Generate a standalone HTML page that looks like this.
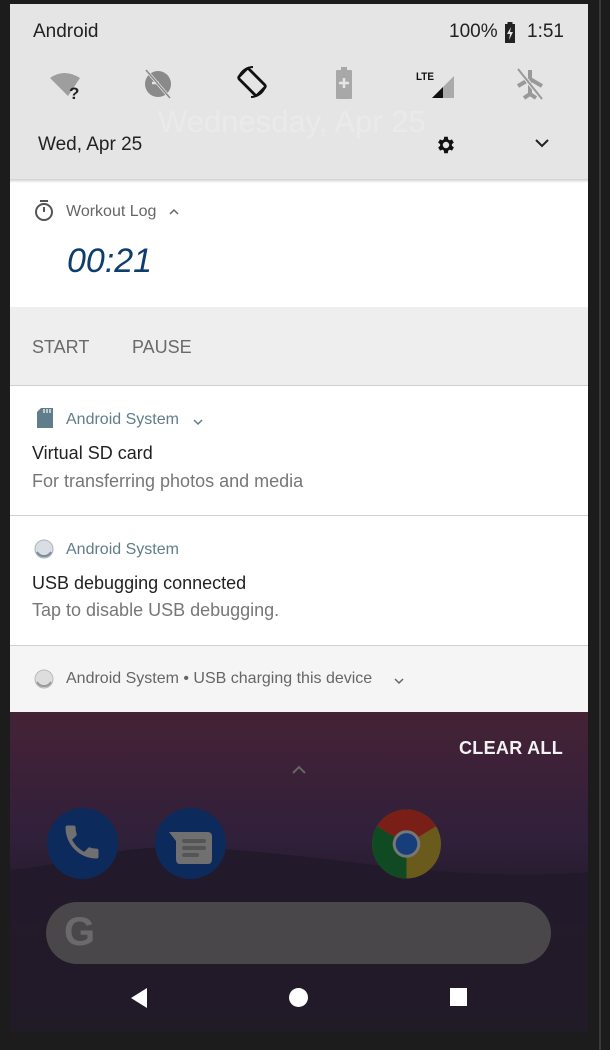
<!DOCTYPE html>
<html><head><meta charset="utf-8"><style>
*{margin:0;padding:0;box-sizing:border-box}
body{width:610px;height:1050px;background:#1c1c1c;font-family:"Liberation Sans",sans-serif;position:relative;overflow:hidden}
.scr{position:absolute;left:10px;top:4px;width:578px;height:1028px;overflow:hidden;background:#2a1d2e}
.edge{position:absolute;left:599px;top:0;width:2px;height:1050px;background:#3a3a3a}
.qs{position:absolute;left:0;top:0;width:578px;height:175px;background:#e6e5e6}
.t{position:absolute;white-space:nowrap}
.wall{position:absolute;left:0;top:708px;width:578px;height:320px;background:linear-gradient(#452236,#30203a 40%,#231a2a 60%,#211a27)}
.sep{position:absolute;left:0;width:578px;height:1px;background:#d0d0d0}
</style></head><body>
<div class="edge"></div>
<div class="scr">
<div class="wall"></div>
<svg style="position:absolute;left:0;top:820px" width="578" height="100"><path d="M0 46 Q40 42 80 32 Q140 20 200 24 Q280 30 340 38 Q420 48 480 50 Q540 52 578 48 L578 100 L0 100Z" fill="#221a2a"/></svg>
<div class="qs"></div>
<div class="t" style="left:23px;top:17px;font-size:19px;color:#222">Android</div>
<div class="t" style="left:439px;top:17px;font-size:19px;color:#222">100%</div>
<svg class="t" style="left:494px;top:18px" width="12" height="22"><rect x="1" y="2" width="10" height="19" fill="#222"/><rect x="3.5" y="0" width="5" height="2" fill="#222"/><path d="M7 5 L3 12 L6 12 L5 18 L9 10 L6 10Z" fill="#e6e5e6"/></svg>
<div class="t" style="left:517px;top:17px;font-size:19px;color:#222">1:51</div>
<svg class="t" style="left:38px;top:66px" width="40" height="30"><path d="M2 8 Q16 -2 32 8 L20 26Z" fill="#9e9e9e"/><text x="21" y="29" font-size="17" font-weight="bold" fill="#222" font-family="Liberation Sans">?</text></svg>
<svg class="t" style="left:132px;top:64px" width="32" height="32"><circle cx="16" cy="16" r="13" fill="#8a8a8a"/><path d="M10 15h7" stroke="#e6e5e6" stroke-width="2.5"/><path d="M4 2 L28 30" stroke="#e6e5e6" stroke-width="3"/><path d="M4 2 L28 30" stroke="#8a8a8a" stroke-width="1.5"/></svg>
<svg class="t" style="left:223px;top:59px" width="38" height="38"><g transform="rotate(-45 19 19)"><rect x="12" y="6" width="14" height="26" rx="2" fill="none" stroke="#111" stroke-width="2.8"/></g><path d="M6 14 A15 15 0 0 1 20 4" fill="none" stroke="#111" stroke-width="2"/><path d="M32 24 A15 15 0 0 1 18 34" fill="none" stroke="#111" stroke-width="2"/></svg>
<svg class="t" style="left:326px;top:63px" width="16" height="32"><rect x="0" y="3" width="16" height="29" rx="1" fill="#a8a8a8"/><rect x="5" y="0" width="6" height="4" fill="#a8a8a8"/><path d="M8 11v10M3 16h10" stroke="#e6e5e6" stroke-width="2.5"/></svg>
<svg class="t" style="left:406px;top:62px" width="40" height="34"><text x="0" y="14" font-size="11" font-weight="bold" fill="#111" font-family="Liberation Sans" transform="scale(0.9 1)">LTE</text><path d="M38 10 L38 32 L16 32Z" fill="#aaa"/><path d="M27 21 L27 32 L16 32Z" fill="#111"/></svg>
<svg class="t" style="left:504px;top:62px" width="32" height="36"><path d="M16 4 L16 30 M4 20 L16 13 L28 20 M10 32 L16 28 L22 32" stroke="#999" stroke-width="4" fill="none"/><path d="M4 3 L28 33" stroke="#e6e5e6" stroke-width="4"/><path d="M4 3 L28 33" stroke="#999" stroke-width="2"/></svg>
<div class="t" style="left:148px;top:100px;font-size:31px;color:#ebeaeb">Wednesday, Apr 25</div>
<div class="t" style="left:28px;top:130px;font-size:19px;color:#222">Wed, Apr 25</div>
<svg class="t" style="left:425px;top:130px" width="22" height="22" viewBox="0 0 24 24"><path fill="#111" d="M19.4 13a7.5 7.5 0 0 0 0-2l2.1-1.6-2-3.5-2.5 1a7 7 0 0 0-1.7-1L15 3h-4l-.4 2.9a7 7 0 0 0-1.7 1l-2.5-1-2 3.5L6.6 11a7.5 7.5 0 0 0 0 2l-2.1 1.6 2 3.5 2.5-1a7 7 0 0 0 1.7 1L11 21h4l.4-2.9a7 7 0 0 0 1.7-1l2.5 1 2-3.5zM13 15.5a3.5 3.5 0 1 1 0-7 3.5 3.5 0 0 1 0 7z" transform="translate(-1 0)"/></svg>
<svg class="t" style="left:525px;top:134px" width="14" height="10"><path d="M1 2 L7 8 L13 2" stroke="#222" stroke-width="2" fill="none"/></svg>
<div style="position:absolute;left:0;top:175px;width:578px;height:4px;background:linear-gradient(#cfcfcf,#fff)"></div>
<div style="position:absolute;left:0;top:179px;width:578px;height:124px;background:#fff"></div>
<svg class="t" style="left:24px;top:196px" width="20" height="22"><rect x="6" y="0" width="8" height="2" fill="#555"/><circle cx="10" cy="12" r="8" fill="none" stroke="#555" stroke-width="2"/><path d="M10 12V7" stroke="#555" stroke-width="2"/></svg>
<div class="t" style="left:56px;top:199px;font-size:16px;color:#666">Workout Log</div>
<svg class="t" style="left:158px;top:204px" width="12" height="8"><path d="M2 6 L6 2 L10 6" stroke="#666" stroke-width="1.5" fill="none"/></svg>
<div class="t" style="left:57px;top:238px;font-size:34px;font-style:italic;color:#0d3c6e">00:21</div>
<div style="position:absolute;left:0;top:303px;width:578px;height:78px;background:#eeeeee"></div>
<div class="t" style="left:22px;top:333px;font-size:18px;color:#6a6a6a">START</div>
<div class="t" style="left:122px;top:333px;font-size:18px;color:#6a6a6a">PAUSE</div>
<div class="sep" style="top:381px"></div>
<div style="position:absolute;left:0;top:382px;width:578px;height:129px;background:#fff"></div>
<svg class="t" style="left:27px;top:404px" width="16" height="20"><path d="M4 0 H16 V20 H0 V4Z" fill="#607d8b"/><path d="M7 1v4M10 1v4M13 1v4" stroke="#fff" stroke-width="1.2"/></svg>
<div class="t" style="left:56px;top:407px;font-size:16px;color:#607d8b">Android System</div>
<svg class="t" style="left:182px;top:414px" width="12" height="8"><path d="M2 2 L6 6 L10 2" stroke="#607d8b" stroke-width="1.5" fill="none"/></svg>
<div class="t" style="left:22px;top:439px;font-size:18px;color:#222">Virtual SD card</div>
<div class="t" style="left:22px;top:467px;font-size:18px;color:#777">For transferring photos and media</div>
<div class="sep" style="top:511px"></div>
<div style="position:absolute;left:0;top:512px;width:578px;height:129px;background:#fff"></div>
<svg class="t" style="left:24px;top:535px" width="20" height="20"><circle cx="10" cy="10" r="9" fill="#d8dee4" stroke="#aab4bc" stroke-width="1"/><path d="M3 13 A8 8 0 0 0 17 13" stroke="#7a8a96" stroke-width="2" fill="none"/></svg>
<div class="t" style="left:56px;top:537px;font-size:16px;color:#607d8b">Android System</div>
<div class="t" style="left:22px;top:569px;font-size:18px;color:#222">USB debugging connected</div>
<div class="t" style="left:22px;top:596px;font-size:18px;color:#777">Tap to disable USB debugging.</div>
<div class="sep" style="top:641px"></div>
<div style="position:absolute;left:0;top:642px;width:578px;height:66px;background:#f5f5f5"></div>
<svg class="t" style="left:24px;top:665px" width="20" height="20"><circle cx="10" cy="10" r="9" fill="#ddd" stroke="#bbb" stroke-width="1"/><path d="M3 13 A8 8 0 0 0 17 13" stroke="#999" stroke-width="2" fill="none"/></svg>
<div class="t" style="left:56px;top:666px;font-size:16px;color:#666">Android System • USB charging this device</div>
<svg class="t" style="left:383px;top:673px" width="12" height="8"><path d="M2 2 L6 6 L10 2" stroke="#666" stroke-width="1.5" fill="none"/></svg>
<div class="t" style="left:449px;top:734px;font-size:18px;font-weight:bold;color:#f2f2f2;letter-spacing:0.3px">CLEAR ALL</div>
<svg class="t" style="left:281px;top:761px" width="16" height="10"><path d="M2 8 L8 2 L14 8" stroke="#666" stroke-width="2" fill="none"/></svg>
<div style="position:absolute;left:37px;top:804px;width:71px;height:71px;border-radius:50%;background:#0d2a5c"></div>
<svg class="t" style="left:50px;top:816px" width="44" height="44" viewBox="0 0 24 24"><path fill="#707070" d="M6.6 10.8c1.4 2.8 3.8 5.1 6.6 6.6l2.2-2.2c.3-.3.7-.4 1-.2 1.1.4 2.3.6 3.6.6.6 0 1 .4 1 1V20c0 .6-.4 1-1 1C10.6 21 3 13.4 3 4c0-.6.4-1 1-1h3.5c.6 0 1 .4 1 1 0 1.3.2 2.5.6 3.6.1.3 0 .7-.2 1z"/></svg>
<div style="position:absolute;left:145px;top:804px;width:71px;height:71px;border-radius:50%;background:#0d2a5c"></div>
<svg class="t" style="left:156px;top:825px" width="48" height="40"><path d="M8 3 H42 Q46 3 46 8 V30 Q46 35 42 35 H14 Q10 35 10 30 V12 L3 3Z" fill="#707070"/><rect x="16" y="10" width="24" height="4" rx="2" fill="#555"/><rect x="16" y="17" width="24" height="4" rx="2" fill="#555"/><rect x="16" y="24" width="17" height="4" rx="2" fill="#555"/></svg>
<svg class="t" style="left:361px;top:804px" width="71" height="72" viewBox="0 0 72 72"><circle cx="36" cy="36" r="35" fill="#6a5a1c"/><path d="M36 36 L6 18 A35 35 0 0 1 66 18Z" fill="#7a1f18"/><path d="M36 36 L6 18 A35 35 0 0 0 36 71Z" fill="#0f4a22"/><circle cx="36" cy="36" r="14" fill="#777"/><circle cx="36" cy="36" r="11" fill="#173e7a"/></svg>
<div style="position:absolute;left:36px;top:898px;width:505px;height:62px;border-radius:31px;background:#4a474b"></div>
<div class="t" style="left:54px;top:906px;font-size:40px;font-weight:bold;color:#6a6a6a">G</div>
<svg class="t" style="left:119px;top:983px" width="20" height="22"><path d="M18 1 V21 L2 11Z" fill="#fff"/></svg>
<div style="position:absolute;left:279px;top:984px;width:19px;height:19px;border-radius:50%;background:#fff"></div>
<div style="position:absolute;left:440px;top:984px;width:17px;height:18px;background:#fff"></div>
</div>
</body></html>
